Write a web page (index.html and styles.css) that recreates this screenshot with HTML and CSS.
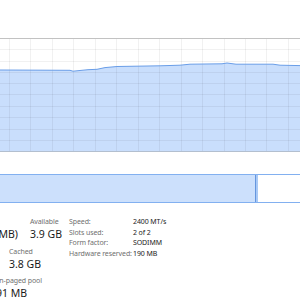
FILE: index.html
```html
<!DOCTYPE html>
<html>
    <head>
        <link rel="stylesheet" href="styles.css">
    </head>
    <body>
        <div class="page">
            <div class="chart">
                <svg width="300" height="112" viewBox="0 0 300 112">
                    <polygon class="area" points="0,31 70,31.3 73,32.2 88,30.7 97,30.3 105,28.6 117,27.5 160,26.8 180,26.2 190,25.2 222,24.8 227,24 236,25.2 273,25.2 280,26.2 300,26.6 300,112 0,112"/>
                    <g class="grid">
                        <line x1="9.5" y1="0" x2="9.5" y2="112"/>
                        <line x1="30.5" y1="0" x2="30.5" y2="112"/>
                        <line x1="52.5" y1="0" x2="52.5" y2="112"/>
                        <line x1="73.5" y1="0" x2="73.5" y2="112"/>
                        <line x1="95.5" y1="0" x2="95.5" y2="112"/>
                        <line x1="116.5" y1="0" x2="116.5" y2="112"/>
                        <line x1="138.5" y1="0" x2="138.5" y2="112"/>
                        <line x1="159.5" y1="0" x2="159.5" y2="112"/>
                        <line x1="181.5" y1="0" x2="181.5" y2="112"/>
                        <line x1="202.5" y1="0" x2="202.5" y2="112"/>
                        <line x1="224.5" y1="0" x2="224.5" y2="112"/>
                        <line x1="245.5" y1="0" x2="245.5" y2="112"/>
                        <line x1="266.5" y1="0" x2="266.5" y2="112"/>
                        <line x1="288.5" y1="0" x2="288.5" y2="112"/>
                        <line x1="0" y1="10.5" x2="300" y2="10.5"/>
                        <line x1="0" y1="22.5" x2="300" y2="22.5"/>
                        <line x1="0" y1="33.5" x2="300" y2="33.5"/>
                        <line x1="0" y1="44.5" x2="300" y2="44.5"/>
                        <line x1="0" y1="55.5" x2="300" y2="55.5"/>
                        <line x1="0" y1="67.5" x2="300" y2="67.5"/>
                        <line x1="0" y1="78.5" x2="300" y2="78.5"/>
                        <line x1="0" y1="90.5" x2="300" y2="90.5"/>
                        <line x1="0" y1="101.5" x2="300" y2="101.5"/>
                    </g>
                    <polyline class="trace" points="0,31 70,31.3 73,32.2 88,30.7 97,30.3 105,28.6 117,27.5 160,26.8 180,26.2 190,25.2 222,24.8 227,24 236,25.2 273,25.2 280,26.2 300,26.6"/>
                </svg>
            </div>

            <div class="composition">
                <div class="in-use"></div>
                <div class="modified"></div>
                <div class="standby"></div>
            </div>

            <div class="details">
                <div class="stats">
                    <div class="stat-row">
                        <div class="stat first-a">
                            <span class="label">In use (Compressed)</span>
                            <span class="value">3.7 GB (190 MB)</span>
                        </div>
                        <div class="stat">
                            <span class="label">Available</span>
                            <span class="value">3.9 GB</span>
                        </div>
                    </div>
                    <div class="stat-row">
                        <div class="stat first-b">
                            <span class="label">Committed</span>
                            <span class="value">5.9/9.5 GB</span>
                        </div>
                        <div class="stat">
                            <span class="label">Cached</span>
                            <span class="value">3.8 GB</span>
                        </div>
                    </div>
                    <div class="stat-row">
                        <div class="stat first-c">
                            <span class="label">Paged pool</span>
                            <span class="value">412 MB</span>
                        </div>
                        <div class="stat">
                            <span class="label">Non-paged pool</span>
                            <span class="value">391 MB</span>
                        </div>
                    </div>
                </div>

                <div class="specs">
                    <span class="label">Speed:</span><span class="spec">2400 MT/s</span>
                    <span class="label">Slots used:</span><span class="spec">2 of 2</span>
                    <span class="label">Form factor:</span><span class="spec">SODIMM</span>
                    <span class="label">Hardware reserved:</span><span class="spec">190 MB</span>
                </div>
            </div>
        </div>
    </body>
</html>
```

FILE: styles.css
```css
* {
    box-sizing: border-box;
}

body {
    margin: 0;
    background-color: white;
    overflow: hidden;
    font-family: "Segoe UI", "Noto Sans", sans-serif;
    color: #1b1b1b;
}

.page {
    padding-top: 38px;
}

.chart {
    border-top: 1px solid #c2c2c2;
    border-bottom: 1px solid #b3bfcf;
    height: 114px;
}
.chart svg {
    display: block;
}
.chart .area {
    fill: #c9defc;
}
.chart .grid line {
    stroke: rgba(0,0,0,0.055);
    stroke-width: 1;
}
.chart .trace {
    fill: none;
    stroke: #6a9ee8;
    stroke-width: 1;
}

.composition {
    display: flex;
    margin: 22px -1px 0 -1px;
    height: 29px;
    border: 1px solid #82b0f0;
}
.composition .in-use {
    width: 256px;
    background-color: #cce0fc;
    border-right: 1px solid #6596de;
}
.composition .modified {
    width: 2px;
    background-color: #a9c9f5;
}
.composition .standby {
    flex: 1;
}

.details {
    display: flex;
    margin-top: 14px;
}

.stats {
    display: flex;
    flex-direction: column;
    gap: 4.5px;
    margin-left: -76px;
    width: 138px;
    flex-shrink: 0;
}
.stat-row {
    display: flex;
    gap: 12px;
}
.stat {
    display: flex;
    flex-direction: column;
    white-space: nowrap;
}
/* left column is wider than what shows; value is right-aligned to its end */
.stat.first-a {
    width: 96px;
    text-align: right;
}
.stat.first-a .label {
    text-align: left;
}
.stat.first-b {
    width: 73px;
}
.stat.first-c {
    width: 54px;
}

.label {
    font-size: 7px;
    letter-spacing: -0.1px;
    line-height: 10px;
    color: #6f6f6f;
}
.value {
    font-size: 10.5px;
    line-height: 15px;
}

.specs {
    display: grid;
    grid-template-columns: 64px auto;
    grid-auto-rows: 10.7px;
    margin-left: 7px;
    white-space: nowrap;
}
.specs .label {
    line-height: 10.7px;
}
.spec {
    font-size: 7px;
    letter-spacing: -0.1px;
    line-height: 10.7px;
}
```
